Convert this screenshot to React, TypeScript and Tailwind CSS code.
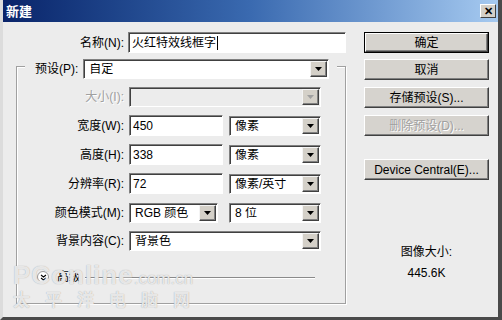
const FONT = { fontFamily: '"Liberation Sans", "Noto Sans CJK SC", sans-serif' };

function Arrow({ disabled = false }: { disabled?: boolean }) {
  return (
    <span className="flex h-full w-[17px] shrink-0 items-center justify-center border border-t-[#f4f4f4] border-l-[#f4f4f4] border-b-[#404040] border-r-[#404040] bg-[#d4d0c8] shadow-[inset_-1px_-1px_0_#808080]">
      <svg width="7" height="4" viewBox="0 0 7 4">
        <path d="M0 0 H7 L3.5 4 Z" fill={disabled ? "#a0a0a0" : "#000"} />
      </svg>
    </span>
  );
}

function Select({ value, w, disabled = false }: { value: string; w: string; disabled?: boolean }) {
  return (
    <div
      className={`flex h-[20px] ${w} items-center border border-t-[#808080] border-l-[#808080] border-b-white border-r-white p-[1px] shadow-[inset_1px_1px_0_#404040] ${
        disabled ? "bg-[#ececec]" : "bg-white"
      }`}
    >
      <span className="flex-1 truncate pl-[4px] text-[12px] leading-none text-black">{value}</span>
      <Arrow disabled={disabled} />
    </div>
  );
}

function Input({ value, w, caret = false }: { value: string; w: string; caret?: boolean }) {
  return (
    <div className={`flex h-[21px] ${w} items-center border border-t-[#808080] border-l-[#808080] border-b-white border-r-white bg-white pl-[3px] shadow-[inset_1px_1px_0_#404040]`}>
      <span className="text-[12px] leading-none text-black">{value}</span>
      {caret && <span className="ml-[1px] h-[14px] w-[1px] bg-black" />}
    </div>
  );
}

function Button({ label, isDefault = false, disabled = false }: { label: string; isDefault?: boolean; disabled?: boolean }) {
  return (
    <div className={`h-[21px] w-[125px] ${isDefault ? "border border-black" : ""}`}>
      <div
        className={`flex h-full w-full items-center justify-center border border-t-white border-l-white border-b-[#404040] border-r-[#404040] bg-[#d6d3ce] text-[12px] leading-none shadow-[inset_-1px_-1px_0_#808080] ${
          disabled ? "text-[#a0a0a0] [text-shadow:1px_1px_0_#fff]" : "text-black"
        }`}
      >
        {label}
      </div>
    </div>
  );
}

function Row({ label, disabled = false, className = "", children }: { label: string; disabled?: boolean; className?: string; children: React.ReactNode }) {
  return (
    <div className={`flex items-center ${className}`}>
      <span className={`w-[112px] pr-[5px] text-right text-[12px] leading-none ${disabled ? "text-[#a0a0a0] [text-shadow:1px_1px_0_#fff]" : "text-black"}`}>
        {label}
      </span>
      {children}
    </div>
  );
}

export default function App() {
  return (
    <div
      className="relative flex h-[320px] w-[502px] flex-col overflow-hidden border-l-[3px] border-r-[4px] border-b-[3px] border-l-[#dcdcdc] border-r-[#4a4a4a] border-b-[#4a4a4a] bg-[#ececec]"
      style={FONT}
    >
      {/* 标题栏 */}
      <div className="flex h-[22px] shrink-0 items-center justify-between bg-gradient-to-r from-[#0a246a] via-[#3a6ab0] to-[#a6caf0] pl-[3px] pr-[2px]">
        <span className="text-[13px] font-bold leading-none text-white">新建</span>
        <span className="flex h-[14px] w-[16px] items-center justify-center border border-t-white border-l-white border-b-[#404040] border-r-[#404040] bg-[#d4d0c8] text-[11px] font-bold leading-none text-black">
          ✕
        </span>
      </div>

      <div className="flex flex-1">
        {/* 左侧 */}
        <div className="w-[350px]">
          <div className="mt-[10px] flex items-center">
            <span className="w-[125px] pr-[4px] text-right text-[12px] leading-none text-black">名称(N):</span>
            <Input value="火红特效线框字" w="w-[218px]" caret />
          </div>

          <div className="ml-[13px] mt-[13px] h-[238px] w-[330px] border border-[#a0a0a0] shadow-[inset_1px_1px_0_#fff,1px_1px_0_#fff]">
            <div className="-mt-[8px] ml-[8px] flex w-[312px] items-center bg-[#ececec] pl-[10px]">
              <span className="text-[12px] leading-none text-black">预设(P):</span>
              <div className="ml-[5px]">
                <Select value="自定" w="w-[246px]" />
              </div>
            </div>

            <Row label="大小(I):" disabled className="mt-[8px]">
              <Select value="" w="w-[192px]" disabled />
            </Row>
            <Row label="宽度(W):" className="mt-[8px]">
              <Input value="450" w="w-[94px]" />
              <div className="ml-[6px]"><Select value="像素" w="w-[92px]" /></div>
            </Row>
            <Row label="高度(H):" className="mt-[8px]">
              <Input value="338" w="w-[94px]" />
              <div className="ml-[6px]"><Select value="像素" w="w-[92px]" /></div>
            </Row>
            <Row label="分辨率(R):" className="mt-[8px]">
              <Input value="72" w="w-[94px]" />
              <div className="ml-[6px]"><Select value="像素/英寸" w="w-[92px]" /></div>
            </Row>
            <Row label="颜色模式(M):" className="mt-[9px]">
              <Select value="RGB 颜色" w="w-[89px]" />
              <div className="ml-[11px]"><Select value="8 位" w="w-[92px]" /></div>
            </Row>
            <Row label="背景内容(C):" className="mt-[8px]">
              <Select value="背景色" w="w-[192px]" />
            </Row>

            <div className="mt-[19px] flex h-[14px] items-center pl-[20px]">
              <span className="flex h-[12px] w-[12px] items-center justify-center rounded-full border border-[#9a9a9a] bg-white">
                <svg width="7" height="7" viewBox="0 0 7 7">
                  <path d="M1 1 L3.5 3 L6 1 M1 4 L3.5 6 L6 4" fill="none" stroke="#000" strokeWidth="1.1" />
                </svg>
              </span>
              <span className="ml-[8px] text-[12px] leading-none text-black">高级</span>
              <span className="ml-[4px] h-[1px] w-[230px] bg-[#8a8a8a] shadow-[0_1px_0_#fff]" />
            </div>
          </div>
        </div>

        {/* 右侧 */}
        <div className="ml-[11px] flex flex-col">
          <div className="mt-[10px]"><Button label="确定" isDefault /></div>
          <div className="mt-[6px]"><Button label="取消" /></div>
          <div className="mt-[7px]"><Button label="存储预设(S)..." /></div>
          <div className="mt-[7px]"><Button label="删除预设(D)..." disabled /></div>
          <div className="mt-[23px]"><Button label="Device Central(E)..." /></div>
          <div className="mt-[66px] text-center text-[12px] leading-none text-black">图像大小:</div>
          <div className="mt-[9px] text-center text-[12px] leading-none text-black">445.6K</div>
        </div>
      </div>

      {/* 水印 */}
      <div className="pointer-events-none absolute left-[10px] top-[262px] flex flex-col text-white/75 [text-shadow:0_0_1px_#9a9a9a]">
        <span className="leading-none">
          <span className="text-[26px] font-bold tracking-[1px]">PConline</span>
          <span className="text-[17px]">.com.cn</span>
        </span>
        <span className="mt-[4px] text-[17px] font-bold leading-none tracking-[15px]">太平洋电脑网</span>
      </div>
    </div>
  );
}
